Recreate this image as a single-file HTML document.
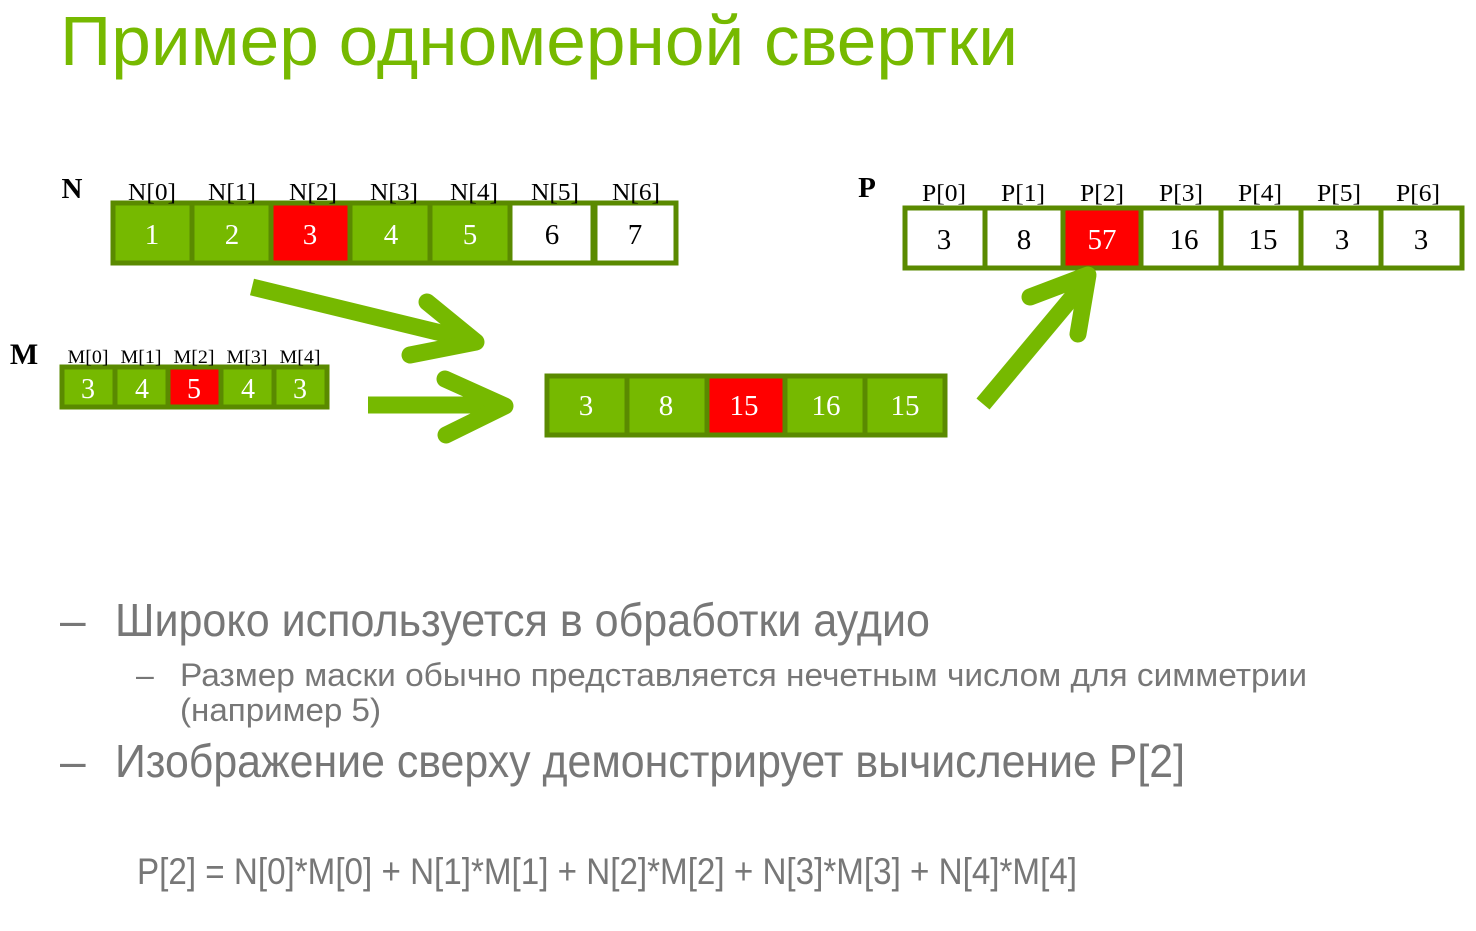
<!DOCTYPE html>
<html><head><meta charset="utf-8"><style>
html,body{margin:0;padding:0;background:#fff;}
svg{display:block;}
</style></head><body>
<svg width="1476" height="931" viewBox="0 0 1476 931" xmlns="http://www.w3.org/2000/svg">
<g font-family="'Liberation Sans', sans-serif">
<text x="60" y="65" font-size="70" fill="#76b900" textLength="958" lengthAdjust="spacingAndGlyphs">Пример одномерной свертки</text>
<g fill="#777">
<text x="60" y="636" font-size="46">–</text>
<text x="115" y="636" font-size="46" textLength="815" lengthAdjust="spacingAndGlyphs">Широко используется в обработки аудио</text>
<text x="136" y="686" font-size="32">–</text>
<text x="180" y="686" font-size="32" textLength="1127" lengthAdjust="spacingAndGlyphs">Размер маски обычно представляется нечетным числом для симметрии</text>
<text x="180" y="721" font-size="32" textLength="201" lengthAdjust="spacingAndGlyphs">(например 5)</text>
<text x="60" y="777" font-size="46">–</text>
<text x="115" y="777" font-size="46" textLength="1070" lengthAdjust="spacingAndGlyphs">Изображение сверху демонстрирует вычисление P[2]</text>
<text x="137" y="884" font-size="37" textLength="940" lengthAdjust="spacingAndGlyphs">P[2] = N[0]*M[0] + N[1]*M[1] + N[2]*M[2] + N[3]*M[3] + N[4]*M[4]</text>
</g>
</g>
<g font-family="'Liberation Serif', serif" text-anchor="middle">
<text x="72" y="198" font-size="29" font-weight="bold">N</text>
<text x="24" y="364" font-size="30" font-weight="bold">M</text>
<text x="867" y="197" font-size="29" font-weight="bold">P</text>
<g stroke="#5a8a00" stroke-width="5">
<rect x="113" y="203" width="79" height="60" fill="#76b900"/>
<rect x="192" y="203" width="79" height="60" fill="#76b900"/>
<rect x="271" y="203" width="79" height="60" fill="#ff0000"/>
<rect x="350" y="203" width="80" height="60" fill="#76b900"/>
<rect x="430" y="203" width="80" height="60" fill="#76b900"/>
<rect x="510" y="203" width="83" height="60" fill="#fff"/>
<rect x="595" y="203" width="81" height="60" fill="#fff"/>
</g>
<g font-size="24" fill="#000">
<text x="152" y="200" textLength="48" lengthAdjust="spacingAndGlyphs">N[0]</text><text x="232" y="200" textLength="48" lengthAdjust="spacingAndGlyphs">N[1]</text><text x="313" y="200" textLength="48" lengthAdjust="spacingAndGlyphs">N[2]</text><text x="394" y="200" textLength="48" lengthAdjust="spacingAndGlyphs">N[3]</text><text x="474" y="200" textLength="48" lengthAdjust="spacingAndGlyphs">N[4]</text><text x="555" y="200" textLength="48" lengthAdjust="spacingAndGlyphs">N[5]</text><text x="636" y="200" textLength="48" lengthAdjust="spacingAndGlyphs">N[6]</text>
</g>
<g font-size="29" fill="#fff">
<text x="152" y="244">1</text><text x="232" y="244">2</text><text x="310" y="244">3</text><text x="391" y="244">4</text><text x="470" y="244">5</text><text x="552" y="244" fill="#000">6</text><text x="635" y="244" fill="#000">7</text>
</g>
<g stroke="#5a8a00" stroke-width="5">
<rect x="62" y="367" width="53" height="40" fill="#76b900"/>
<rect x="115" y="367" width="53" height="40" fill="#76b900"/>
<rect x="168" y="367" width="53" height="40" fill="#ff0000"/>
<rect x="221" y="367" width="53" height="40" fill="#76b900"/>
<rect x="274" y="367" width="53" height="40" fill="#76b900"/>
</g>
<g font-size="19" fill="#000">
<text x="88" y="363" textLength="41" lengthAdjust="spacingAndGlyphs">M[0]</text><text x="141" y="363" textLength="41" lengthAdjust="spacingAndGlyphs">M[1]</text><text x="194" y="363" textLength="41" lengthAdjust="spacingAndGlyphs">M[2]</text><text x="247" y="363" textLength="41" lengthAdjust="spacingAndGlyphs">M[3]</text><text x="300" y="363" textLength="41" lengthAdjust="spacingAndGlyphs">M[4]</text>
</g>
<g font-size="28" fill="#fff">
<text x="88" y="398">3</text><text x="142" y="398">4</text><text x="194" y="398">5</text><text x="248" y="398">4</text><text x="300" y="398">3</text>
</g>
<g stroke="#5a8a00" stroke-width="5">
<rect x="547" y="376" width="80" height="59" fill="#76b900"/>
<rect x="627" y="376" width="80" height="59" fill="#76b900"/>
<rect x="707" y="376" width="78" height="59" fill="#ff0000"/>
<rect x="785" y="376" width="80" height="59" fill="#76b900"/>
<rect x="865" y="376" width="80" height="59" fill="#76b900"/>
</g>
<g font-size="29" fill="#fff">
<text x="586" y="415">3</text><text x="666" y="415">8</text><text x="744" y="415">15</text><text x="826" y="415">16</text><text x="905" y="415">15</text>
</g>
<g stroke="#5a8a00" stroke-width="5">
<rect x="905" y="208" width="80" height="60" fill="#fff"/>
<rect x="985" y="208" width="78" height="60" fill="#fff"/>
<rect x="1063" y="208" width="78" height="60" fill="#ff0000"/>
<rect x="1141" y="208" width="80" height="60" fill="#fff"/>
<rect x="1221" y="208" width="80" height="60" fill="#fff"/>
<rect x="1301" y="208" width="80" height="60" fill="#fff"/>
<rect x="1381" y="208" width="81" height="60" fill="#fff"/>
</g>
<g font-size="24" fill="#000">
<text x="944" y="201" textLength="44" lengthAdjust="spacingAndGlyphs">P[0]</text><text x="1023" y="201" textLength="44" lengthAdjust="spacingAndGlyphs">P[1]</text><text x="1102" y="201" textLength="44" lengthAdjust="spacingAndGlyphs">P[2]</text><text x="1181" y="201" textLength="44" lengthAdjust="spacingAndGlyphs">P[3]</text><text x="1260" y="201" textLength="44" lengthAdjust="spacingAndGlyphs">P[4]</text><text x="1339" y="201" textLength="44" lengthAdjust="spacingAndGlyphs">P[5]</text><text x="1418" y="201" textLength="44" lengthAdjust="spacingAndGlyphs">P[6]</text>
</g>
<g font-size="29" fill="#000">
<text x="944" y="249">3</text><text x="1024" y="249">8</text><text x="1102" y="249" fill="#fff">57</text><text x="1184" y="249">16</text><text x="1263" y="249">15</text><text x="1342" y="249">3</text><text x="1421" y="249">3</text>
</g>
</g>
<g stroke="#76b900" stroke-width="17" fill="none" stroke-linecap="butt" stroke-linejoin="round">
<line x1="252" y1="287" x2="470" y2="340"/>
<polyline points="427,302 476,342 410,355" stroke-linecap="round"/>
<line x1="368" y1="405" x2="500" y2="405"/>
<polyline points="445,379 505,406 446,435" stroke-linecap="round"/>
<line x1="983" y1="404" x2="1085" y2="282"/>
<polyline points="1030,297 1088,275 1078,334" stroke-linecap="round"/>
</g>
</svg>
</body></html>
